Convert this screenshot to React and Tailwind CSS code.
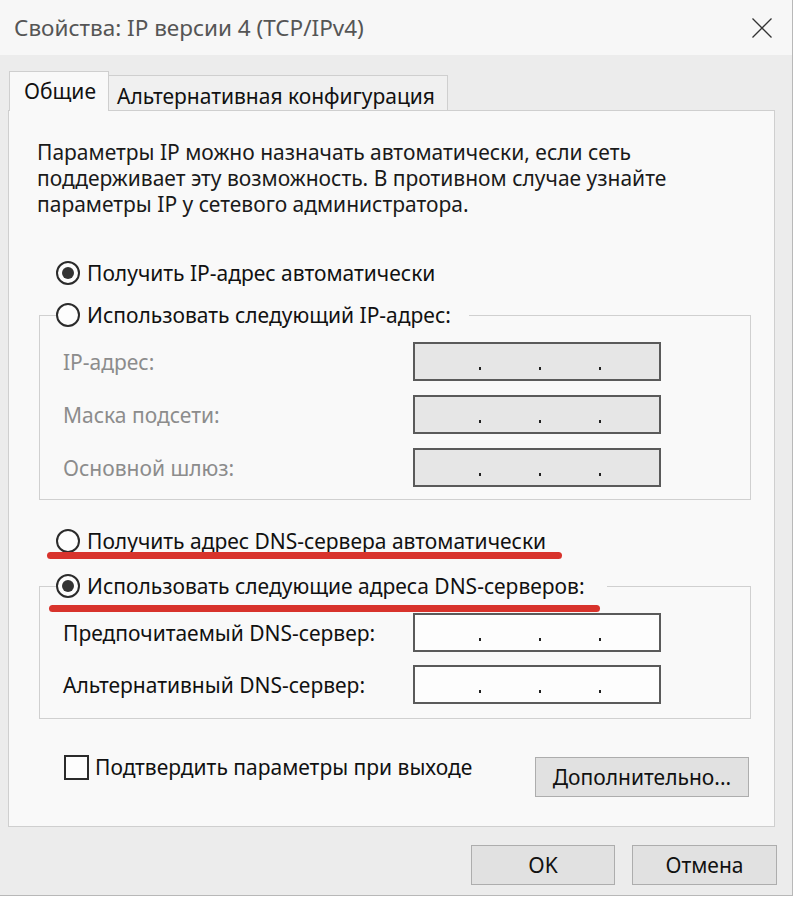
import React from "react";

const Radio = ({ checked }) => (
  <span className="w-[24px] h-[24px] rounded-full border-2 border-[#2b2b2b] bg-[#fdfdfd] flex items-center justify-center shrink-0">
    {checked && <span className="w-[12px] h-[12px] rounded-full bg-[#333333]" />}
  </span>
);

const IpBox = ({ disabled }) => (
  <div
    className={
      disabled
        ? "w-[248px] h-[39px] border-2 border-[#5a5a5a] bg-[#e6e6e6] flex items-end pb-[9px] pl-[64px] gap-[58px] shrink-0"
        : "w-[248px] h-[39px] border-2 border-[#5a5a5a] bg-[#fdfdfd] flex items-end pb-[9px] pl-[64px] gap-[58px] shrink-0"
    }
  >
    <span className="w-[2px] h-[3px] bg-[#222]" />
    <span className="w-[2px] h-[3px] bg-[#222]" />
    <span className="w-[2px] h-[3px] bg-[#222]" />
  </div>
);

const FieldRow = ({ label, disabled }) => (
  <div className="flex items-center h-[39px]">
    <span
      className={
        disabled
          ? "w-[357px] pl-[7px] text-[#8c8c8c]"
          : "w-[357px] pl-[7px] text-[#111]"
      }
    >
      {label}
    </span>
    <IpBox disabled={disabled} />
  </div>
);

export default function App() {
  return (
    <div className="w-[796px] h-[898px] bg-white font-['Noto_Sans',sans-serif] text-[21px] leading-[26px] text-[#111] overflow-hidden">
      <div className="w-[793px] h-[896px] border-r border-b border-[#b8b8b8] flex flex-col">
        {/* Title bar */}
        <div className="h-[55px] bg-[#f7f7f7] flex items-center justify-between pl-[14px] pr-[20px] shrink-0">
          <span className="text-[22.5px] text-[#555555]">Свойства: IP версии 4 (TCP/IPv4)</span>
          <svg width="20" height="20" viewBox="0 0 20 20">
            <path d="M0.5 0.5 L19.5 19.5 M19.5 0.5 L0.5 19.5" stroke="#333" strokeWidth="1.3" fill="none" />
          </svg>
        </div>

        {/* Body */}
        <div className="flex-1 bg-[#ececec] flex flex-col">
          <div className="pl-[8px] pt-[16px]">
            {/* Tabs */}
            <div className="flex items-end h-[39px] pl-[1px]">
              <div className="relative z-10 -mb-px w-[100px] h-[40px] bg-[#f9f9f9] border border-b-0 border-[#cfcfcf] pl-[14px] pt-[6px]">
                Общие
              </div>
              <div className="w-[339px] h-[35px] bg-[#f0f0f0] border border-l-0 border-b-0 border-[#cfcfcf] pl-[8px] pt-[7px] whitespace-nowrap">
                Альтернативная конфигурация
              </div>
            </div>

            {/* Panel */}
            <div className="relative w-[767px] border border-[#cfcfcf] bg-[#f9f9f9] pl-[30px] pr-[23px] pt-[28px] pb-[29px]">
              <p className="-ml-[2px] text-[#1a1a1a] whitespace-nowrap">
                Параметры IP можно назначать автоматически, если сеть
                <br />
                поддерживает эту возможность. В противном случае узнайте
                <br />
                параметры IP у сетевого администратора.
              </p>

              <div className="mt-[43px] pl-[17px] flex items-center gap-[7px]">
                <Radio checked />
                <span>Получить IP-адрес автоматически</span>
              </div>

              <fieldset className="mt-[16px] border border-[#d0d0d0] px-[16px] pb-[12px]">
                <legend className="pr-[18px]">
                  <div className="flex items-center gap-[7px]">
                    <Radio />
                    <span>Использовать следующий IP-адрес:</span>
                  </div>
                </legend>
                <div className="mt-[14px] flex flex-col gap-[14px]">
                  <FieldRow label="IP-адрес:" disabled />
                  <FieldRow label="Маска подсети:" disabled />
                  <FieldRow label="Основной шлюз:" disabled />
                </div>
              </fieldset>

              <div className="relative mt-[28px] pl-[17px] flex items-center gap-[7px]">
                <Radio />
                <span>Получить адрес DNS-сервера автоматически</span>
                <span className="absolute left-[8px] top-[24px] w-[515px] h-[7px] rounded-full bg-[#d8332c]" />
              </div>

              <fieldset className="mt-[19px] border border-[#d0d0d0] px-[16px] pb-[14px]">
                <legend className="pr-[22px] relative">
                  <div className="flex items-center gap-[7px]">
                    <Radio checked />
                    <span>Использовать следующие адреса DNS-серверов:</span>
                  </div>
                  <span className="absolute -left-[7px] top-[32px] w-[551px] h-[7px] rounded-full bg-[#d8332c]" />
                </legend>
                <div className="mt-[14px] flex flex-col gap-[13px]">
                  <FieldRow label="Предпочитаемый DNS-сервер:" />
                  <FieldRow label="Альтернативный DNS-сервер:" />
                </div>
              </fieldset>

              <div className="mt-[35px] flex items-start justify-between">
                <div className="ml-[25px] flex items-center gap-[6px]">
                  <span className="w-[25px] h-[25px] border-2 border-[#2b2b2b] bg-[#fdfdfd] shrink-0" />
                  <span>Подтвердить параметры при выходе</span>
                </div>
                <button className="mt-[3px] mr-[2px] w-[214px] h-[40px] bg-[#e1e1e1] border border-[#adadad] text-[#111] flex items-center justify-center">
                  <span>
                    <span className="underline">Д</span>ополнительно...
                  </span>
                </button>
              </div>
            </div>
          </div>

          {/* Bottom buttons */}
          <div className="mt-[18px] flex justify-end gap-[17px] pr-[15px]">
            <button className="w-[144px] h-[40px] bg-[#e1e1e1] border border-[#adadad] text-[#111] flex items-center justify-center">
              OK
            </button>
            <button className="w-[145px] h-[40px] bg-[#e1e1e1] border border-[#adadad] text-[#111] flex items-center justify-center">
              Отмена
            </button>
          </div>
        </div>
      </div>
    </div>
  );
}
